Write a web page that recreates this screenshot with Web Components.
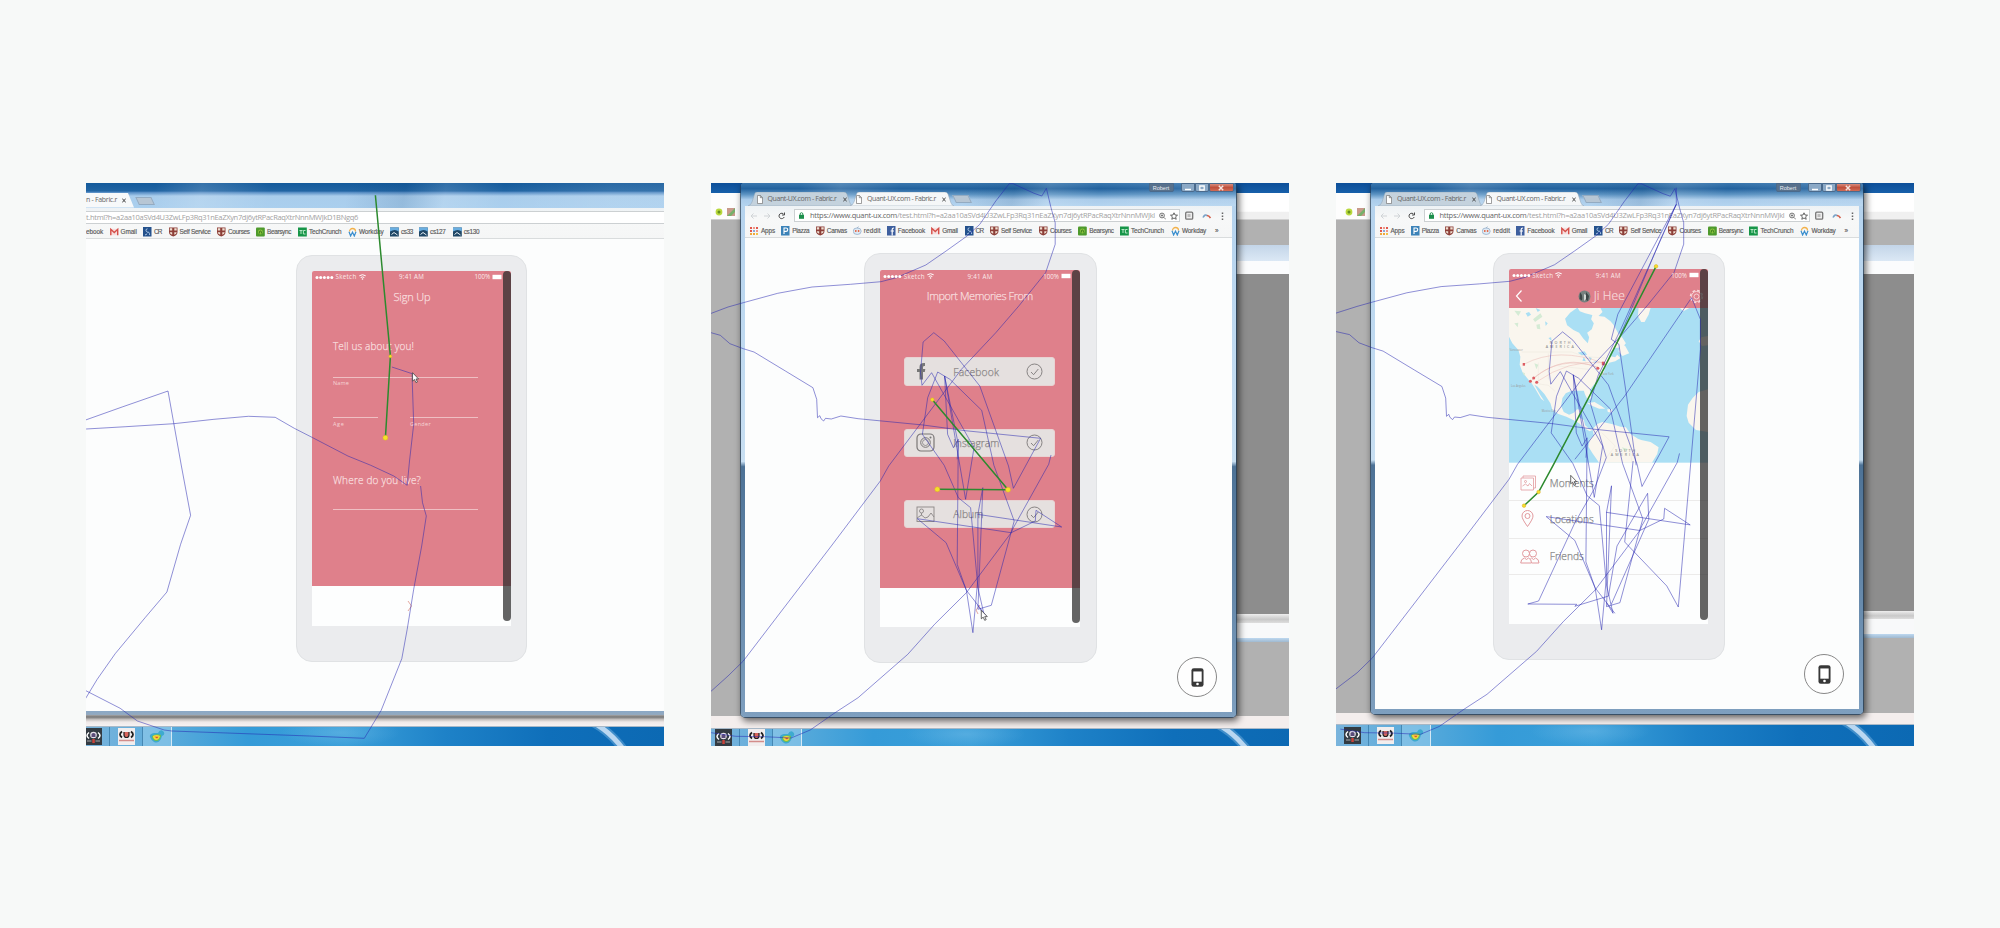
<!DOCTYPE html>
<html lang="en">
<head>
<meta charset="utf-8">
<title>Session recordings</title>
<style>
html,body{margin:0;height:100%}
body{background:#f7f9f8;font-family:"Open Sans","Liberation Sans",sans-serif;overflow:hidden}
</style>
</head>
<body>
<session-board>
  <session-recording kind="signup"></session-recording>
  <session-recording kind="import"></session-recording>
  <session-recording kind="profile"></session-recording>
</session-board>
<script>
function define(name, build, after) {
  customElements.define(name, class extends HTMLElement {
    connectedCallback() {
      if (this.shadowRoot) return;
      const root = this.attachShadow({mode: 'open'});
      const t = document.createElement('template');
      t.innerHTML = build(this);
      root.appendChild(t.content.cloneNode(true));
      if (after) after(this, root);
    }
  });
}

/* Text tracked so that it fills a given width */
define('fit-text', () => `<style>
:host{display:inline-block;white-space:pre;line-height:1.2;flex:none}
span{display:inline-block}
</style><span><slot></slot></span>`, (el, root) => {
  const s = root.querySelector('span'), w = +el.getAttribute('w');
  const n = s.getBoundingClientRect().width;
  if (n) s.style.letterSpacing = (w - n) / el.textContent.length + 'px';
  el.style.width = w + 'px';
});

/* Favicons of the bookmark bar */
const ICONS = {
  apps: '<g><path fill="#e2574c" d="M0 1h2v2H0zM0 4h2v2H0z"/><path fill="#f0a63c" d="M0 7h2v2H0zM3 7h2v2H3z"/><path fill="#e98" d="M3 1h2v2H3zM6 4h2v2H6z"/><path fill="#8aa9dc" d="M3 4h2v2H3z"/><path fill="#e2574c" d="M6 1h2v2H6z"/><path fill="#f2c14a" d="M6 7h2v2H6z"/></g>',
  piazza: '<rect width="8.5" height="9.5" fill="#3b82b8"/><path d="M3 8V2h2a1.6 1.6 0 0 1 0 3.4H3" fill="none" stroke="#fff" stroke-width="1.1"/>',
  shield: '<path d="M0 .5h8.500V5q0 3-4.250 4.500Q0 8 0 5z" fill="#8d3f38"/><path d="M.8 1.200h2.400v2.300H.8zM5.300 1.200h2.400v2.300H5.300zM.8 5.200h2.400v2.600Q.8 6.800.8 5.200zM5.300 5.200h2.400q0 1.600-2.400 2.600z" fill="#f0e0d2"/>',
  reddit: '<ellipse cx="4.200" cy="5.200" rx="4" ry="3.300" fill="#dfeaf5" stroke="#8aa6c4" stroke-width=".7"/><circle cx="2.800" cy="5" r=".9" fill="#e2603c"/><circle cx="5.600" cy="5" r=".9" fill="#e2603c"/><path d="M4.200 2 5.500.8" stroke="#8aa6c4"/>',
  fb: '<rect width="8.500" height="9.500" fill="#3e5f9e"/><path d="M5.200 9.500V5H7M5.200 5H3.600M5.200 5V3.200q0-1.200 1.800-1.200" fill="none" stroke="#fff" stroke-width="1.200"/>',
  gmail: '<path d="M.2 1.800h8.100v6.400H.2z" fill="#f6dede"/><path d="M.8 8.300V2.300l3.450 3.300 3.450-3.300v6" fill="none" stroke="#d5504a" stroke-width="1.400"/>',
  cr: '<rect width="8.500" height="9.500" fill="#24518c"/><path d="M4.500 1.800a1.500 1.500 0 1 0 0 3M4.300 5.800q2-2 2.400 2.300M2 8l2-1" fill="none" stroke="#b9d2ee" stroke-width=".9"/>',
  bear: '<rect y=".5" width="8.800" height="9" rx="1" fill="#4e9a2c"/><circle cx="4.400" cy="5" r="2.400" fill="#8cc63f"/><path d="M3.400 6.500V5a1 1 0 0 1 2 0v1.500" fill="none" stroke="#2c6a17" stroke-width=".8"/>',
  tc: '<rect y=".5" width="8.800" height="9" fill="#169548"/><path d="M1.500 3.500h3M3 3.500v3.500M7.500 3.500H5.400V7h2.100" fill="none" stroke="#b8e6c6" stroke-width="1"/>',
  wd: '<path d="M1.500 4.500a3 3 0 0 1 6 0" fill="none" stroke="#f3b14a" stroke-width="1.300"/><path d="M1 4.800 2.600 9l1.900-3.800L6.300 9 8 4.800" fill="none" stroke="#3b8fce" stroke-width="1.200"/>',
  cs: '<rect y=".5" width="8.800" height="9" fill="#1f4766"/><path d="M0 .5h8.800v4Q5 1.500 0 4.500z" fill="#6aaee0"/><path d="M1.500 7.500 4 5.500l3.500 2.500" stroke="#e8f0f5" stroke-width="1" fill="none"/>'
};
define('bookmark-item', el => `<style>
:host{display:flex;align-items:center;flex:none;height:12px;color:#5a5a5a;font:6.4px "Liberation Sans",sans-serif;-webkit-text-stroke:.15px #5a5a5a}
svg{flex:none;width:9px;height:10px;margin-right:2px}
</style>${ICONS[el.getAttribute('icon')] ? `<svg viewBox="0 0 9 10">${ICONS[el.getAttribute('icon')]}</svg>` : ''}<fit-text w="${el.getAttribute('w')}">${el.textContent}</fit-text>`,
el => { el.style.width = el.getAttribute('pitch') + 'px'; });

const bm = list => list.map(([i, t, w, p]) => `<bookmark-item icon="${i}" w="${w}" pitch="${p}">${t}</bookmark-item>`).join('');
const BOOKMARKS = {
  signup: bm([['none','ebook',17,23.5],['gmail','Gmail',16.300,33.500],['cr','CR',7.700,25.500],['shield','Self Service',31,48.500],['shield','Courses',21.700,39],['bear','Bearsync',24,42],['tc','TechCrunch',32.500,50],['wd','Workday',24.500,42],['cs','cs33',12,29],['cs','cs127',15.500,33.700],['cs','cs130',15.500,30]]),
  full: bm([['apps','Apps',14,31.300],['piazza','Piazza',17,34.500],['shield','Canvas',20,37],['reddit','reddit',17,34],['fb','Facebook',27.300,44.500],['gmail','Gmail',15.500,33.300],['cr','CR',7.700,25.300],['shield','Self Service',31,49],['shield','Courses',21.500,39.400],['bear','Bearsync',24.500,41.600],['tc','TechCrunch',33,51],['wd','Workday',24.300,44],['none','»',4,8]])
};

define('browser-tab', el => `<style>
:host{display:block;height:14px;position:relative;flex:none}
svg{position:absolute;inset:0;width:100%;height:100%}
.row{position:relative;display:flex;align-items:center;height:14px;color:#666;font:7px "Open Sans",sans-serif}
.row svg{position:static;flex:none}
</style>
<svg viewBox="0 0 104 14" preserveAspectRatio="none"><path d="M0 14Q3 13 4 10L6.500 2Q7 0 9 0H95Q97 0 98 2L101 11Q102 13.500 104 14Z" fill="${el.hasAttribute('active') ? '#f5f7f8' : '#c4d2dd'}" stroke="#8fa3b5" stroke-width=".5"/></svg>
<div class="row" style="padding-left:${el.getAttribute('pad') || 8.500}px">
<svg style="width:6px;height:9px;margin-right:5px" viewBox="0 0 6 9"><path d="M.5.5h3L5.500 2.500v6h-5zM3.300.5v2.200h2.200" fill="#fff" stroke="#777" stroke-width=".7"/></svg>
<fit-text w="69">Quant-UX.com - Fabric.r</fit-text>
<svg style="width:4px;height:5px;margin-left:6px" viewBox="0 0 4 5"><path d="M.3.500 3.700 4.500M3.700.5.300 4.500" stroke="#444" stroke-width=".9"/></svg></div>`,
el => { el.style.width = (el.getAttribute('w') || 104) + 'px'; });

define('nav-icons', () => `<style>
:host{display:flex;align-items:center;gap:7px;padding-left:5px;width:43px;box-sizing:border-box;flex:none}
svg{width:7px;height:8px}
</style>
<svg viewBox="0 0 7 8"><path d="M7 4H1M3.500 1.500 1 4l2.500 2.500" fill="none" stroke="#cfd3d6"/></svg>
<svg viewBox="0 0 7 8"><path d="M0 4h6M3.500 1.500 6 4 3.500 6.500" fill="none" stroke="#cfd3d6"/></svg>
<svg viewBox="0 0 7 8"><path d="M6 2.500A2.700 2.700 0 1 0 6.200 5M6.500.5V3H4" fill="none" stroke="#4d4d4d"/></svg>`);

/* Chrome window: title strip, tabs, address row, bookmarks, page */
define('browser-window', el => {
  const full = el.hasAttribute('full');
  return `<style>
:host{display:flex;flex-direction:column;box-sizing:border-box}
.top{flex:none;height:25px;background:linear-gradient(180deg,#145a9b 0,#2165a3 32%,#5a90c6 38%,#a9cdec 52%,#aacfee 100%);position:relative;display:flex;align-items:flex-end}
.top::before{content:"";position:absolute;inset:0;background:linear-gradient(100deg,#fff0 12%,#ffffff26 20%,#fff0 32%,#fff0 45%,#0a3c7022 55%,#ffffff20 62%,#fff0 72%,#ffffff18 90%)}
:host([full]) .top{height:23.700px;background:linear-gradient(180deg,#3a77ae 0,#22629e 25%,#5e95c4 50%,#aacceb 72%,#b4d4ef 100%);border-radius:3px 3px 0 0}
:host([full]){border-radius:4px;box-shadow:0 0 0 .7px #25425f,2px 3px 7px 1px #0009;background:linear-gradient(90deg,#8eb3d6,#6d93b7)}
.edge{padding:0 3.500px 5px 4px;display:flex;flex-direction:column;flex:1;min-height:0;background:linear-gradient(180deg,#b5d3ee 0,#c8dff2 50%,#4d7296 51%,#7e9fbf 100%);border-radius:0 0 4px 4px}
:host(:not([full])) .edge{padding:0;background:none}
.tab1{width:48px;height:14.500px;display:flex;align-items:center;color:#666;font:7px "Open Sans";background:#f7f9fa;clip-path:polygon(0 0,42px 0,48px 100%,0 100%);position:relative}
.tab1 svg{width:4px;height:5px;margin-left:5px}
.new{width:16px;height:7.500px;background:#b7c6d4;border:.5px solid #93abc2;transform:skewX(25deg);margin:0 0 3.500px 3px;position:relative;box-sizing:border-box}
.bar{flex:none;height:31.700px;background:linear-gradient(#eef2f5,#f7f8f8 40%,#f5f6f6);border-bottom:1px solid #d9dcdd;box-sizing:border-box}
.url{display:flex;align-items:center;height:${full ? 19 : 18}px}
.box{display:flex;align-items:center;height:13px;box-sizing:border-box;background:#fff;border:1px solid #ccd0d2;font:7.500px "Open Sans",sans-serif;color:#a2a2a2}
.marks{display:flex;align-items:center;height:12px}
.page{flex:1;background:#fcfdfd;position:relative;display:block;min-height:0}
.ctl{position:absolute;right:2px;top:.5px;display:flex;height:9px;gap:0}
.ctl div{border:.5px solid #4a6a8c;box-sizing:border-box;height:9px;border-radius:0 0 2px 2px;display:flex;align-items:center;justify-content:center;font:5.500px "Liberation Sans";color:#e8eef4}
</style>
<div class="top">${full ? `
  <browser-tab style="margin-left:${el.getAttribute('tabx') || 7}px" w="105"></browser-tab><browser-tab active w="104" pad="6" style="margin-left:-3px"></browser-tab><div class="new" style="margin-left:0"></div>
  <div class="ctl"><div style="width:25px;background:#58718c;margin-right:7px">Robert</div><div style="width:14px;background:#8ba9c6"><svg width="6" height="6"><path d="M0 4.500h6" stroke="#fff" stroke-width="1.500"/></svg></div><div style="width:14px;background:#8ba9c6"><svg width="6" height="6"><path d="M.8 1h4.400v4H.8z" fill="none" stroke="#fff" stroke-width="1.300"/></svg></div><div style="width:25px;background:linear-gradient(#d98b7c,#c0503c 50%,#d06b56)"><svg width="6" height="6"><path d="M.8.8 5.200 5.200M5.200.8.800 5.200" stroke="#f6e4e0" stroke-width="1.400"/></svg></div></div>` : `
  <div class="tab1"><fit-text w="31">n - Fabric.r</fit-text><svg viewBox="0 0 4 5"><path d="M.2.500 3.800 4.500M3.800.5.200 4.500" stroke="#444"/></svg></div><div class="new"></div>`}
</div>
<div class="edge">
<div class="bar">
  <div class="url">${full ? `<nav-icons></nav-icons><div class="box" style="width:386px;margin-left:6px;padding-left:4px">
    <svg width="5" height="7" style="margin-right:6px;flex:none"><path d="M1.200 3.500V2a1.300 1.300 0 0 1 2.600 0v1.500" fill="none" stroke="#1d8f4c" stroke-width=".9"/><rect y="2.800" width="5" height="4" fill="#1d8f4c"/></svg>
    <fit-text w="87" style="color:#666">https://www.quant-ux.com</fit-text><fit-text w="258">/test.html?h=a2aa10aSVd4U3ZwLFp3Rq31nEaZXyn7dj6ytRPacRaqXtrNnnMWJkl</fit-text>
    <svg width="7" height="8" style="margin-left:4px;flex:none"><circle cx="3" cy="3.500" r="2.400" fill="none" stroke="#666" stroke-width=".9"/><path d="M1.800 3.500h2.400M3 2.300v2.400M4.800 5.300 7 7.500" stroke="#666" stroke-width=".8"/></svg>
    <svg width="8" height="8" viewBox="0 0 8 8" style="margin-left:4px;flex:none"><path d="M4 .8 5 3l2.500.2-1.900 1.600.6 2.500L4 6 1.800 7.300l.6-2.500L.5 3.200 3 3z" fill="none" stroke="#555" stroke-width=".9"/></svg></div>
    <svg width="44" height="10" style="margin-left:5px;flex:none"><rect x=".7" y="1.200" width="7" height="7" rx="1" fill="#eee" stroke="#777" stroke-width="1.300"/><path d="M2.500 3h3v3h-3z" fill="#bbb"/><path d="M18 6.500q2-4 4.500-1.500" fill="none" stroke="#7aa3c8" stroke-width="1.600"/><path d="M22 4.500q2 0 3.500 2.500" fill="none" stroke="#d3604c" stroke-width="1.600"/><path d="M37.500 1.500v1.500M37.500 4.500v1.500M37.500 7.500v1.500" stroke="#666" stroke-width="1.500"/></svg>` : `<div class="box" style="width:578px;border-left:0;border-right:0;margin-top:2px"><fit-text w="272">t.html?h=a2aa10aSVd4U3ZwLFp3Rq31nEaZXyn7dj6ytRPacRaqXtrNnnMWJkD1BNgq6</fit-text></div>`}</div>
  <div class="marks" style="${full ? 'padding-left:5px;margin-top:-.500px' : ''}">${BOOKMARKS[full ? 'full' : 'signup']}</div>
</div>
<div class="page"><slot></slot></div>
</div>`;
});

/* Phone mockup with a status bar and scroll bar */
define('phone-frame', el => `<style>
:host{display:block;box-sizing:border-box;background:#ebecee;border:1px solid #e0e2e4;border-radius:16px}
.screen{position:relative;background:#fdfefe;overflow:hidden;height:100%;border-radius:2px 2px 0 0}
.thumb{position:absolute;right:0;top:0;width:8px;background:#2c2c2cbb;border-radius:4px}
.status{position:absolute;inset:2px 11px auto 3px;height:8px;display:flex;align-items:center;justify-content:space-between;color:#fbeaea;font:6.200px "Open Sans";z-index:1}
.l{display:flex;align-items:center;width:70px}
.r{display:flex;align-items:center;width:70px;justify-content:flex-end;margin-right:-2px}
fit-text.c{position:relative;left:3px}
</style><div class="screen"><slot></slot>
<div class="status"><div class="l"><svg width="19" height="5"><g fill="#fff"><circle cx="2" cy="2.500" r="1.500"/><circle cx="5.700" cy="2.500" r="1.500"/><circle cx="9.400" cy="2.500" r="1.500"/><circle cx="13.100" cy="2.500" r="1.500"/><circle cx="16.800" cy="2.500" r="1.500"/></g></svg><fit-text w="21" style="margin:0 2px 0 1.500px">Sketch</fit-text><svg width="7" height="6"><path d="M.3 1.800q3.200-2.200 6.400 0M1.700 3.500q1.800-1.200 3.600 0" stroke="#fff" fill="none"/><circle cx="3.500" cy="5" r=".8" fill="#fff"/></svg></div>
<fit-text class="c" w="25">9:41 AM</fit-text>
<div class="r"><fit-text w="15.500">100%</fit-text><svg width="10" height="6" style="margin-left:2px"><rect x=".5" y=".8" width="9" height="4.400" fill="#fff"/></svg></div></div>
<div class="thumb" style="height:${el.getAttribute('thumb')}px"></div></div>`);

define('text-field', el => `<style>
:host{display:block;border-top:1px solid #efbfc3;color:#f6d5d6;font:5.500px "Open Sans";height:14px;box-sizing:border-box;padding-top:1.500px}
</style>${el.textContent ? `<fit-text w="${el.getAttribute('w')}">${el.textContent}</fit-text>` : ''}`);

define('signup-screen', () => `<style>
:host{display:block;color:#f8dcdd}
.pink{background:#df808b;height:315px;box-sizing:border-box;padding:17.500px 33px 0 21px;display:flex;flex-direction:column}
h1,h2{font:300 11px "Open Sans";margin:0;line-height:15px;-webkit-text-stroke:.25px}
h1{padding-left:60.500px;margin-bottom:35.500px}
h2{font-size:10px;line-height:14px}
.two{display:flex;justify-content:space-between;margin-top:26.500px}
.next{display:block;margin:14px 0 0 95px}
</style><div class="pink"><h1><fit-text w="37">Sign Up</fit-text></h1><h2><fit-text w="81">Tell us about you!</fit-text></h2>
<text-field w="16" style="margin-top:23.500px">Name</text-field>
<div class="two"><text-field w="11.500" style="width:45px">Age</text-field><text-field w="21" style="width:68px">Gender</text-field></div>
<h2 style="margin-top:41.500px"><fit-text w="88">Where do you live?</fit-text></h2>
<text-field style="margin-top:22.500px"></text-field></div>
<svg class="next" width="6" height="12"><path d="M1 1l3.500 5L1 11" fill="none" stroke="#e5a9a0"/></svg>`);

define('source-card', el => `<style>
:host{display:flex;align-items:center;box-sizing:border-box;width:151px;height:28.700px;background:#e5e0df;border-radius:3px;border:1px solid #e9d3d3;padding:0 11px;color:#8c8888;font:300 10.300px "Open Sans";-webkit-text-stroke:.25px}
.i{width:37px;display:flex}.c{margin-left:auto}
</style><div class="i"><slot name="icon"></slot></div><fit-text w="${el.getAttribute('w')}">${el.getAttribute('label')}</fit-text>
<svg class="c" width="17" height="17"><circle cx="8.500" cy="8.500" r="7.500" fill="none" stroke="#7d7979" stroke-width=".9"/><path d="M5 9l2.600 2.700L12.300 6" fill="none" stroke="#7d7979" stroke-width=".9"/></svg>`);

define('import-screen', () => `<style>
:host{display:block;color:#f8dcdd}
.pink{background:#df808b;height:317.500px;box-sizing:border-box;padding:18px 0 0;display:flex;flex-direction:column;align-items:flex-start}
h1{font:300 11px "Open Sans";margin:0 0 54px 46.500px;line-height:15px;-webkit-text-stroke:.25px}
.cards{display:flex;flex-direction:column;gap:42.500px;margin-left:24px}
.next{display:block;margin:16px 0 0 95px}
</style><div class="pink"><h1><fit-text w="106">Import Memories From</fit-text></h1>
<div class="cards">
<source-card label="Facebook" w="46"><svg slot="icon" width="17" height="20"><path d="M3.500 17.500V10H1V7h2.500V5Q3.500.5 9 1v3Q7 3.700 7 5.200V7h2.300L8.800 10H7v7.500z" fill="#777"/></svg></source-card>
<source-card label="Instagram" w="46"><svg slot="icon" width="19" height="19" style="flex:none"><g fill="none" stroke="#7a7676"><rect x="1" y="1" width="17" height="17" rx="4" stroke-width="1.200"/><circle cx="9.500" cy="9.500" r="4.800"/><circle cx="9.500" cy="9.500" r="3" stroke-width=".7"/></g><circle cx="14.500" cy="4.500" r="1" fill="#777"/></svg></source-card>
<source-card label="Album" w="30"><svg slot="icon" width="19" height="17" style="flex:none"><g fill="none" stroke="#8a8686" stroke-width=".9"><rect x="1" y="1" width="17" height="14.500"/><circle cx="5.500" cy="5" r="2"/><path d="M5.500 7v2.500M1 12l4.500-3 3.500 3 3-1 3-4 3 4"/></g></svg></source-card>
</div></div><svg class="next" width="6" height="12"><path d="M5 1 1 6l2 4" fill="none" stroke="#e5a9a0"/></svg>`);

define('list-row', el => `<style>
:host{display:flex;align-items:center;height:38px;box-sizing:border-box;border-bottom:1px solid #ecebea;padding-left:11px;color:#8a8a8a;font:300 10.200px "Open Sans";-webkit-text-stroke:.25px}
.i{width:30px;display:flex}
</style><div class="i"><slot name="icon"></slot></div><fit-text w="${el.getAttribute('w')}">${el.getAttribute('label')}</fit-text>`);

define('world-map', () => `<style>
:host{display:block;height:154.700px}svg{display:block;width:100%;height:100%}
</style><svg viewBox="12 126 596 464" preserveAspectRatio="none">
<rect x="12" y="126" width="596" height="464" fill="#aadff4"/>
<g fill="#faf6ee">
<path d="M12 126H215L195 140 180 158 186 178 205 192 222 200 235 218 248 232 252 214 246 200 260 190 266 172 258 160 262 146 280 150 298 152 316 166 326 178 338 200 352 216 362 232 352 244 330 246 318 256 312 270 330 274 336 266 346 276 330 286 312 290 300 304 296 320 282 338 266 356 254 372 258 396 248 402 240 386 236 374 212 374 196 376 182 382 172 396 168 420 176 438 192 446 206 440 216 430 230 432 226 444 218 452 236 462 240 478 252 488 266 490 254 496 236 486 222 472 204 462 184 452 160 444 142 432 136 412 118 384 98 362 88 356 106 388 118 406 108 398 94 374 80 352 66 336 52 318 44 296 46 272 40 252 22 232 12 212Z"/>
<path d="M218 126H286L292 138 278 152 258 146 240 142 224 136Z"/>
<path d="M400 126H436L430 146 418 168 408 168 398 150Z"/>
<path d="M346 232 360 240 372 262 352 270 340 256Z"/>
<path d="M246 412 268 408 288 420 300 428 282 428 262 420ZM306 430 320 430 322 440 308 438Z"/>
<path d="M262 490 276 474 292 468 320 474 346 482 362 484 376 504 398 518 408 522 436 528 460 544 456 564 440 590H282L262 562 250 542 254 520 266 508Z"/>
<path d="M608 370 580 378 562 396 548 416 544 450 550 470 572 492 608 498ZM608 210 588 214 580 226 590 240 608 238Z"/>
<path d="M524 126H552L534 136Z"/>
</g>
<g fill="#aadff4"><path d="M62 142 72 138 78 146 68 152ZM92 126 106 132 98 138ZM120 166 128 172 122 180ZM130 216 138 214 140 226ZM218 260 238 256 246 266 230 268ZM232 284 236 272 242 286ZM250 272 260 276 256 284ZM262 288 278 284 272 290ZM340 130 330 150 342 146Z"/></g>
<g fill="#d5ebd5"><path d="M28 134 48 136 40 150ZM84 160 106 142 112 152 90 168ZM94 176 104 174 106 190 96 188ZM28 172 40 170 38 184ZM88 292 100 296 94 310ZM52 318 60 322 58 330ZM350 544 370 550 358 556Z"/></g>
<g fill="none" stroke="#e6e0d8" stroke-width="1"><path d="M50 258H200L240 272 300 276M90 352 130 358 150 376M100 290V350M130 262V340M160 300 250 310M290 500 330 540 300 580M370 500 380 590"/></g>
<g fill="none" stroke="#e9b9b4" stroke-width="1.500"><path d="M56 295Q160 240 296 292M76 346Q160 264 280 304M94 348Q190 280 294 290M86 336Q180 260 278 306"/></g>
<g fill="#dd5d63"><rect x="53" y="291" width="7" height="8"/><circle cx="86" cy="336" r="4.500"/><circle cx="76" cy="346" r="4.500"/><circle cx="95" cy="349" r="4.500"/><rect x="290" y="287" width="9" height="11"/><circle cx="278" cy="307" r="4.500"/></g>
<g fill="#777" font-family="Open Sans" font-size="11"><text x="134" y="233" textLength="62">NORTH</text><text x="122" y="246" textLength="84">AMERICA</text><text x="330" y="558" textLength="60">SOUTH</text><text x="317" y="570" textLength="84">AMERICA</text></g>
<g fill="#999" font-family="Open Sans" font-size="8"><text x="14" y="254">Vancouver</text><text x="18" y="363">Los Angeles</text><text x="290" y="327">New York</text><text x="110" y="437">Mexico City</text></g>
</svg>`);

define('profile-screen', () => `<style>
:host{display:block}
.head{background:#df808b;height:38.500px;display:flex;align-items:flex-end;box-sizing:border-box;padding:0 4px 4px 6px;color:#f8dcdd;font:300 12px "Open Sans";-webkit-text-stroke:.2px}
.who{display:flex;align-items:center;margin:0 auto 0 55px}
svg{display:block;flex:none}
</style><div class="head"><svg width="8" height="14" style="margin-bottom:1px"><path d="M6.500 1.500 1.500 7l5 5.500" fill="none" stroke="#fff" stroke-width="1.200"/></svg>
<div class="who"><svg width="13" height="13"><circle cx="6.500" cy="6.500" r="6" fill="#77817f"/><path d="M2 2.500q3 2 2 8L1.500 9zM8 2l3 4-1 5-2-1z" fill="#3d4646"/><path d="M6 4l2 1v4l-2 2z" fill="#d4d8d5"/></svg><fit-text w="31" style="margin-left:3px">Ji Hee</fit-text></div>
<svg width="15" height="15"><circle cx="7.500" cy="7.500" r="6" fill="none" stroke="#f8d8da" stroke-width="1.500" stroke-dasharray="2.700 2"/><circle cx="7.500" cy="7.500" r="5" fill="none" stroke="#f8d8da" stroke-width=".9"/><circle cx="7.500" cy="7.500" r="2.500" fill="none" stroke="#f8d8da" stroke-width=".9"/></svg></div>
<world-map></world-map>
<list-row label="Moments" w="44" style="padding-top:3.500px"><svg slot="icon" width="17" height="16"><g fill="none" stroke="#e29a9e" stroke-width=".8"><path d="M1 3h12.500v12H1z"/><path d="M3 3V1h12.500v12h-2M2.500 11l3-2 2.500 2 1.500-2.500L12 11"/><circle cx="5.500" cy="6.500" r="1"/></g></svg></list-row>
<list-row label="Locations" w="44"><svg slot="icon" width="15" height="18" style="margin-left:1px"><g fill="none" stroke="#e29a9e"><path d="M6.500 16.500Q1 9 1 6a5.500 5.500 0 0 1 11 0q0 3-5.500 10.500z"/><circle cx="6.500" cy="6" r="2.500"/></g></svg></list-row>
<list-row label="Friends" w="34" style="height:36px"><svg slot="icon" width="20" height="15"><g fill="none" stroke="#e29a9e"><circle cx="6" cy="4.500" r="3.500"/><circle cx="13" cy="4.500" r="3.500"/><path d="M.7 14q0-4 3.800-5l2 1.500 2-1.500q3 1 3 5zM10.500 9.500l1-.5 2 1.500 2-1.500q3.500 1 3.500 5h-7"/></g></svg></list-row>`);

define('device-button', () => `<style>
:host{position:absolute;width:40px;height:40px;box-sizing:border-box;border:1px solid #888;border-radius:50%;background:#fefefe;display:flex;align-items:center;justify-content:center}
</style><svg width="13" height="19" viewBox="0 0 14 20"><rect x=".5" width="13" height="20" rx="2.500" fill="#383838"/><rect x="2.500" y="3.500" width="9" height="11" fill="#fff"/><circle cx="7" cy="17" r="1.400" fill="#fff"/></svg>`);

define('task-bar', el => `<style>
:host{display:flex;flex:1;border-top:1px solid #a9b9c8;background:radial-gradient(ellipse 60px 14px at 44% 30%,#7cc0ea66,#fff0),linear-gradient(90deg,#79b4dc 0,#5aabdb 14%,#359bd8 28%,#3a9fd9 45%,#1e82c8 62%,#0f6fba 80%,#0c69b3 100%);overflow:hidden;position:relative;min-height:0}
.cell{flex:none;width:33px;box-sizing:border-box;border-right:1px solid #4588b4;display:flex;justify-content:center;align-items:center}
.cell.a{background:#9bd0ee88;border-color:#d5e9f5}
.sw{margin-left:auto;margin-right:14px}
</style><div class="cell" style="margin-left:${el.getAttribute('shift')}px"><svg width="17" height="17"><rect width="17" height="17" fill="#333b42"/><path d="M4 4.500Q0 7.500 4 10.500M13 4.500q4 3 0 6" stroke="#fff" stroke-width="1.500" fill="none"/><circle cx="8.500" cy="7" r="3.300" fill="#e7e2ea"/><path d="M6.500 6q2-2 4 0v3h-4z" fill="#5b4d79"/><path d="M7.300 11h2.500v4H7.300z" fill="#c94339"/><path d="M2 13h4.500M10.500 13H15" stroke="#aaa"/></svg></div>
<div class="cell"><svg width="17" height="17"><rect width="17" height="17" fill="#f2eeee"/><path d="M4 3.500Q0 6.500 4 9.500M13 3.500q4 3 0 6" stroke="#222" stroke-width="1.800" fill="none"/><path d="M6 4v3q0 2.500 2.500 2.500T11 7V4" fill="#d9655c" stroke="#222" stroke-width="1.200"/><path d="M1 12.500h15" stroke="#d38d8b" stroke-width="1.500"/></svg></div>
<div class="cell a" style="width:29px"><svg width="16" height="15"><path d="M1 8Q0 5 5 4l4 0q2-4 5-2 3 3-1 5l-1 3q-3 5-7 3Q2 11 1 8z" fill="#3eaacf"/><path d="M3 7q4-3 9-1 0 5-4 6-5 0-5-5z" fill="#6fc04e"/><path d="M4 7q3.500-1.800 7 0-1 4-4 4-3-1-3-4z" fill="#f2d83c"/><path d="M5.500 7.700h4L8 9.500z" fill="#e04a2c"/></svg></div>
<svg class="sw" width="60" height="22" viewBox="0 0 60 22"><path d="M4-4Q22 6 36 26" fill="none" stroke="#7fb7e2" stroke-width="9" opacity=".45"/><path d="M4-4Q22 6 36 26" fill="none" stroke="#d8eafa" stroke-width="5" opacity=".8"/></svg>`);

/* Mouse (blue) and gaze (green) traces; input coordinates are those of the capture grid */
const SHARED = [
  '0,419 60,393 100,380 190,352 280,333 380,325 460,317 500,305 577,267 630,225 685,180 718,145 760,75 795,23 805,23 860,52 880,60 892,37 904,95 915,140 915,205 890,290 820,390 760,470 670,580 480,870 458,915 330,1110 200,1305 100,1455 60,1500 0,1562',
  '0,465 40,478 65,503 100,518 128,528 210,585 282,635 292,670 294,725 300,719 303,728 310,735 315,727 330,729 355,720 400,728 570,747 680,764 877,787 806,937 793,870 718,630 625,495 598,470 570,498 563,590 567,628 592,590 703,815 681,970 626,600 634,775 649,815',
  '649,815 662,790 659,1165 683,1243 700,1370 713,1208 713,1015 726,935 713,1300 748,1288 808,1035 755,868 723,703 640,610 608,588 582,665 568,775 625,868 662,965 694,995 713,1235 730,1320 713,1288',
  '626,600 662,805 659,850',
  '904,837 898,865 806,1055 800,1070 683,1250 600,1345 530,1435 400,1565 340,1610 275,1662 225,1686 155,1682 80,1681 16,1670',
  '712,1015 932,1053 865,1003 863,1035 800,1070 555,1028 630,1100 683,1243 735,1320'
];
const TRACES = {
  signup: {
    blue: ['0,738 110,693 230,645 265,870 289,1018 263,1105 227,1248 170,1325 92,1433 45,1510 0,1595',
      '16,759 120,752 245,743 350,730 440,721 510,724 560,757 608,785 700,840 760,868 820,900 855,928 861,855 872,745 868,610 868,593 815,573',
      '890,930 895,980 905,1020 893,1110 872,1240 855,1360 841,1448 787,1603 743,1687 600,1680 240,1665 220,1662 150,1635 105,1597 0,1535'],
    green: '772,58 789,270 811,541 798,785', dots: [[811,541,1.5],[798,785,2.5]], cursor: [869,590]
  },
  import: {blue: SHARED, green: '594,671 792,941 607,940', dots: [[594,671,1.8],[792,941,2.5],[607,940,2.5]], cursor: [722,1303]},
  profile: {
    blue: SHARED.map(p => p.split(' ').map(q => { const [x, y] = q.split(',').map(Number); return `${x < 5 ? x : (x * .998 + 11).toFixed(1)},${(y * .993 + 1).toFixed(1)}`; }).join(' ')).concat([
      '905,85 870,160 752,415 735,490 755,505 775,660 800,868', '905,35 905,85 880,150 760,460 700,600 680,680 722,845 690,940 640,1040 545,1275 517,1284 645,1285 640,1291 728,1260 732,1230 750,1110 830,952 833,1030 735,1285',
      '905,85 860,200 780,420 750,500', '770,1098 880,1230 910,1293 943,855 968,520 968,430 945,365 770,660 640,850', '792,855 770,1098']),
    green: '852,271 750,500 717,575 583,868 545,948 507,989', dots: [[852,271,1.8],[545,948,1.8],[507,989,1.800]], cursor: [629,898]
  }
};
define('trace-layer', el => {
  const t = TRACES[el.getAttribute('kind')];
  const X = x => (x - 15.700) / 2.613, Y = y => (y - 21) / 3;
  const pts = s => s.split(' ').map(q => { const [x, y] = q.split(','); return X(+x).toFixed(1) + ',' + Y(+y).toFixed(1); }).join(' ');
  return `<style>:host{position:absolute;inset:0;display:block;pointer-events:none}svg{display:block;width:100%;height:100%}</style>
<svg viewBox="0 0 578 563"><g fill="none" stroke="#2424b0" stroke-opacity=".6" stroke-width=".85" stroke-linejoin="round">${t.blue.map(b => `<polyline points="${pts(b)}"/>`).join('')}</g>
<polyline points="${pts(t.green)}" fill="none" stroke="#2c8a2e" stroke-width="1.500"/>
${t.dots.map(d => `<circle cx="${X(d[0])}" cy="${Y(d[1])}" r="${d[2]}" fill="#f5e02a" stroke="#d8a92c" stroke-width=".5"/>`).join('')}
<path transform="translate(${X(t.cursor[0])} ${Y(t.cursor[1])})" d="M0 0v8.500l1.900-1.700 1.500 3.200 1.500-.7-1.500-3H6z" fill="#fff" stroke="#444" stroke-width=".8"/></svg>`;
});

const LAYOUT = {
  import: {left: 30, width: 494.500, height: 534.500, phone: [119, 15, 232.500, 410], pad: '16.500px 15.700px 35px 15.300px', thumb: 352.500, fab: [432, 419.500], bar: 545, shelf: 533, mid: [431, 9, 15, 4], shift: -4, tabx: 7},
  profile: {left: 34.500, width: 492, height: 531.500, phone: [118.500, 15, 231.500, 407], pad: '15.500px 15.700px 34.500px 14.800px', thumb: 350.500, fab: [429.500, 416.500], bar: 541, shelf: 530, mid: [428, 8.500, 15, 4], shift: 0, tabx: 7}
};
define('session-recording', el => {
  const k = el.getAttribute('kind'), L = LAYOUT[k];
  const css = `<style>
:host{display:flex;flex-direction:column;position:relative;overflow:hidden;width:578px;height:563px;background:#f3eeee}
.back{flex:none;display:grid;grid-template-columns:50% 50%}
.col{display:flex;flex-direction:column}.col>*{flex:none}
.blue{height:10.500px;background:linear-gradient(#0d4f99,#1760aa)}
.white{background:#fdfdfd;border-bottom:1px solid #d0d0d0;box-sizing:border-box}
.col>.g{background:#b1b1b1;flex:1}
browser-window[full]{position:absolute;top:0}
.mini{display:flex;align-items:center}
.frame{flex:none;height:15.500px;background:linear-gradient(#8aa8c6 0,#93a9bf 3.500px,#a5a5a5 4px,#777 6px,#c4c0be 8.500px,#efe9e8 11px,#f6f2f2 100%)}
</style>`;
  if (k === 'signup') return css + `
<browser-window style="height:528px;flex:none"><phone-frame thumb="350" style="width:231px;height:407px;margin:15.500px 0 0 210px;padding:15.500px 15px 34.500px 15px"><signup-screen></signup-screen></phone-frame></browser-window>
<div class="frame"></div><task-bar shift="-9"></task-bar><trace-layer kind="signup"></trace-layer>`;
  const [px, py, pw, ph] = L.phone;
  return css + `
<div class="back" style="height:${L.shelf}px">
 <div class="col"><div class="blue"></div><div class="white mini" style="height:27px;padding-top:11px;padding-left:${k === 'import' ? 4 : 8.500}px"><svg width="20" height="10"><circle cx="4" cy="5" r="3.400" fill="#b9d93e"/><circle cx="4" cy="5" r="1.500" fill="#658f20"/><path d="M12 1h8v8h-8z" fill="#c99a8c"/><path d="M12 9l8-8v4l-4 4z" fill="#77b06a"/></svg></div><div class="g"></div></div>
 <div class="col"><div class="blue"></div><div class="white" style="height:27px;background:linear-gradient(#fff 70%,#f0f0f0 75%)"></div><div style="height:25px;background:#b1b1b1"></div><div style="height:15.500px;background:linear-gradient(#c3d5e8,#dbe8f5)"></div><div style="height:13px;background:#fbfcfd"></div><div style="height:${L.mid[0] - 91}px;background:#8d8d8d"></div><div style="height:${L.mid[1]}px;background:linear-gradient(#eee 0,#ddd 25%,#c9c9c9 60%,#ddd 100%)"></div><div style="height:${L.mid[2]}px;background:#f8f9fa"></div><div style="height:${L.mid[3]}px;background:linear-gradient(#bdd8f0,#9fb9d0)"></div><div class="g"></div></div>
</div>
<div style="height:${L.bar - L.shelf}px;flex:none;background:#f4eeed"></div>
<task-bar shift="${L.shift}"></task-bar>
<browser-window full tabx="${L.tabx}" style="left:${L.left}px;width:${L.width}px;height:${L.height}px">
 <phone-frame thumb="${L.thumb}" style="width:${pw}px;height:${ph}px;margin:${py}px 0 0 ${px}px;padding:${L.pad}"><${k}-screen></${k}-screen></phone-frame>
 <device-button style="left:${L.fab[0]}px;top:${L.fab[1]}px"></device-button>
</browser-window>
<trace-layer kind="${k}"></trace-layer>`;
});

define('session-board', () => `<style>
:host{display:grid;grid-template-columns:repeat(3,578px);gap:47px;padding:182.500px 0 0 86px}
</style><slot></slot>`);
</script>
</body>
</html>
